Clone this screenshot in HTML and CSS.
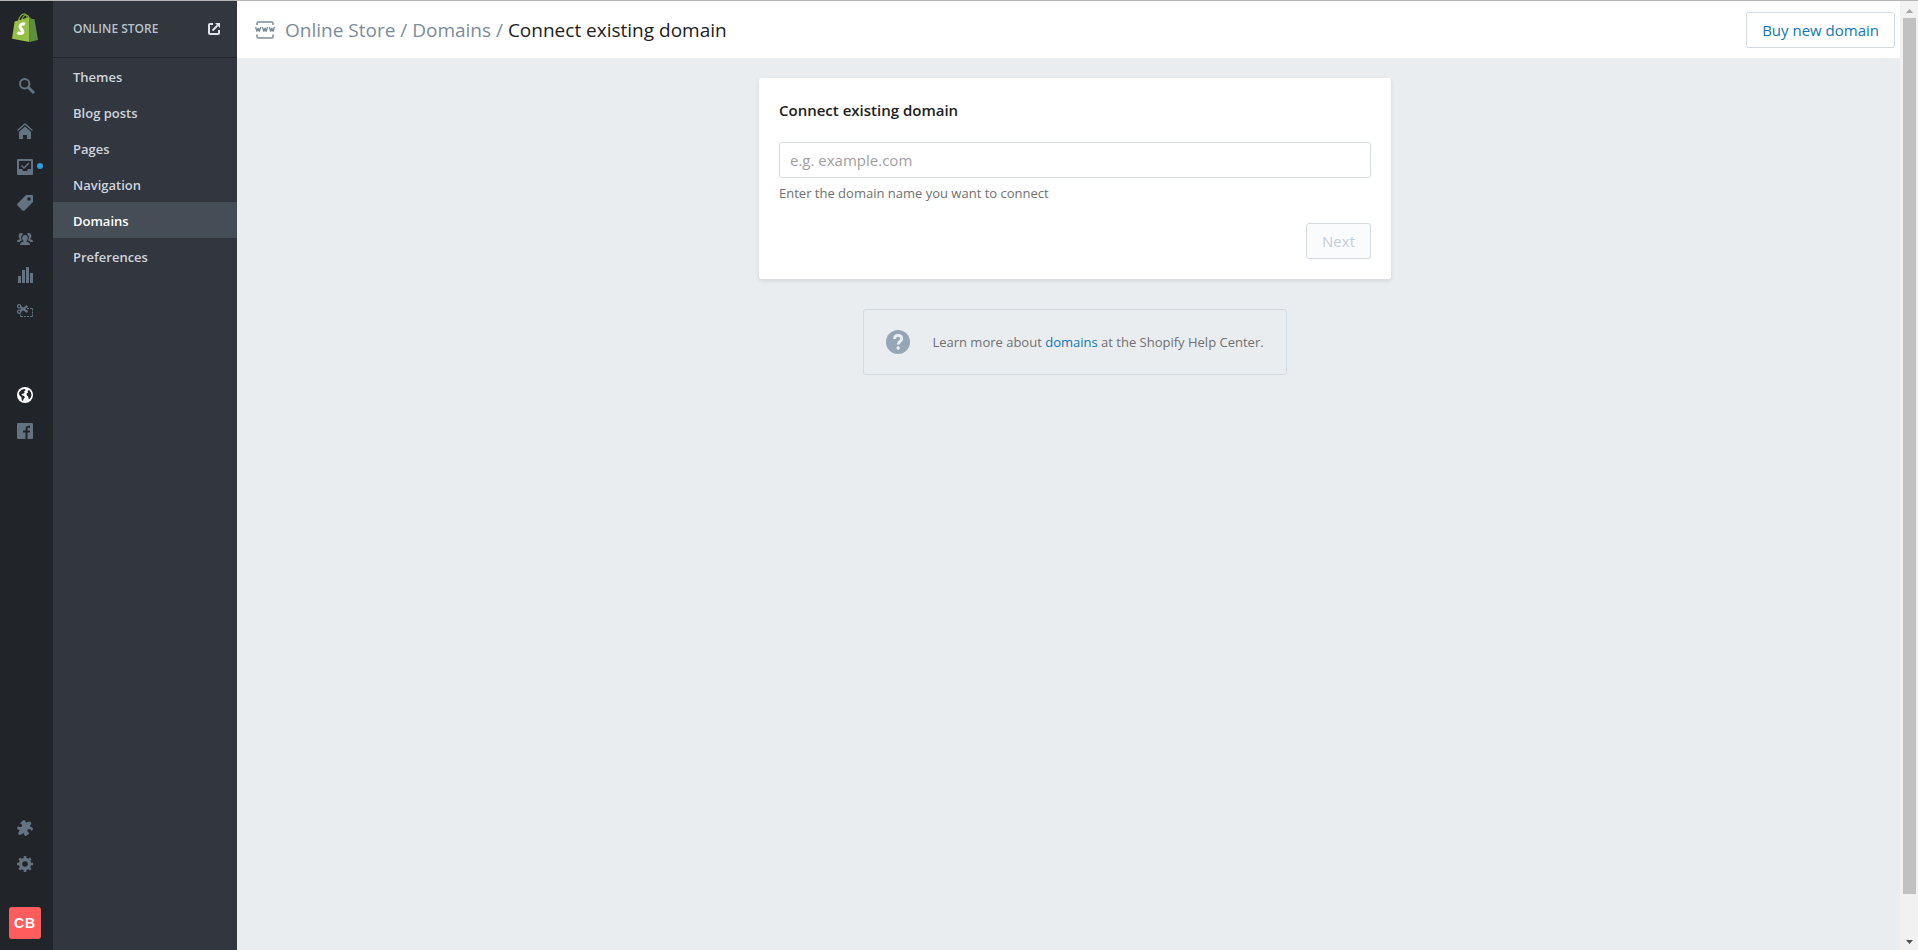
FILE: index.html
```html
<!DOCTYPE html>
<html lang="en">
<head>
  <meta charset="UTF-8">
  <meta name="viewport" content="width=device-width, initial-scale=1.0">
  <title>Connect existing domain</title>
  <link rel="stylesheet" href="styles.css">
</head>
<body>
  <div class="app">
    <nav class="rail" aria-label="Main">
      <a class="logo" href="#" aria-label="Shopify">
        <svg width="26" height="29" viewBox="0 0 26 29">
          <path d="M6.5 8C7 4 10 .8 12.300 .8c2 0 2.900 2.200 3 5.700M10 7c.5-3 2.500-5 4.500-5 1.500 0 2.300 1.500 2.600 4" fill="none" stroke="#7da63a" stroke-width="1.200"/>
          <path d="M2.600 8.600L17.500 4v25L0 25.800z" fill="#95bf46"/>
          <path d="M17.500 4l2 1.800 3 .4L26 27.100 17.500 29z" fill="#5e8e3e"/>
          <path d="M12.900 11.200c-1.200-.6-4.200-.7-4.800 2.100-.4 2.600 3.200 3.300 2.700 5.600-.5 2.100-3.500 1.800-5.400.6" fill="none" stroke="#fff" stroke-width="3.200"/>
        </svg>
      </a>
      <a class="rail-item rail-search" href="#" aria-label="Search">
        <svg width="16" height="16" viewBox="0 0 16 16"><circle cx="5.700" cy="5.700" r="4.700" fill="none" stroke="currentColor" stroke-width="2"/><path d="M9 9l6 6" stroke="currentColor" stroke-width="3"/></svg>
      </a>
      <a class="rail-item" href="#" aria-label="Home">
        <svg width="16" height="16" viewBox="0 0 16 16"><path d="M.5 7.500L8 .9l7.500 6.600" fill="none" stroke="currentColor" stroke-width="1.300"/><path d="M8 3.500l6 5.200V16h-4v-4H6v4H2V8.700z" fill="currentColor"/></svg>
      </a>
      <a class="rail-item" href="#" aria-label="Orders">
        <svg width="16" height="16" viewBox="0 0 16 16"><path fill="currentColor" fill-rule="evenodd" d="M1 0h14a1 1 0 0 1 1 1v14a1 1 0 0 1-1 1H1a1 1 0 0 1-1-1V1a1 1 0 0 1 1-1zm1 2v8h3l1 2h4l1-2h3V2z"/><path d="M4.500 6.500L7 9l5-5" fill="none" stroke="currentColor" stroke-width="1.500"/></svg>
        <span class="dot"></span>
      </a>
      <a class="rail-item" href="#" aria-label="Products">
        <svg width="16" height="16" viewBox="0 0 16 16"><path fill="currentColor" fill-rule="evenodd" d="M9 0h6a1 1 0 0 1 1 1v6l-8.500 8.500a1.500 1.500 0 0 1-2 0L.5 10.500a1.500 1.500 0 0 1 0-2zm3 2.200a1.800 1.800 0 1 0 0 3.600 1.800 1.800 0 0 0 0-3.600z"/></svg>
      </a>
      <a class="rail-item" href="#" aria-label="Customers">
        <svg width="16" height="16" viewBox="0 0 16 16"><path fill="currentColor" d="M8 4c1.800 0 2.800 1.200 2.800 2.900 0 1.300-.5 2.300-1.200 2.900v.9c1.500.4 3.400.9 3.400 3.300H3c0-2.400 1.900-2.900 3.400-3.300v-.9c-.7-.6-1.200-1.600-1.200-2.900C5.200 5.200 6.200 4 8 4z"/><path fill="currentColor" d="M4 2c1 0 1.800.4 2.200 1.100C4.700 3.800 4 5.200 4.200 7c.1 1 .3 1.700.8 2.500-1.300.4-2 .8-2.500 1.500H0c0-1.800 1.300-2.300 2.700-2.700v-.8C2 7 1.700 6 1.700 5 1.700 3.200 2.500 2 4 2zm8 0c-1 0-1.800.4-2.200 1.100 1.500.7 2.200 2.100 2 3.900-.1 1-.3 1.700-.8 2.500 1.300.4 2 .8 2.500 1.500H16c0-1.800-1.300-2.300-2.700-2.700v-.8c.7-.5 1-1.500 1-2.500 0-1.800-.8-3-2.300-3z"/></svg>
      </a>
      <a class="rail-item" href="#" aria-label="Reports">
        <svg width="16" height="16" viewBox="0 0 16 16"><path fill="currentColor" d="M1 9h3v7H1zM5 3h3v13H5zM9 0h3v16H9zM13 6h3v10h-3z"/></svg>
      </a>
      <a class="rail-item" href="#" aria-label="Discounts">
        <svg width="16" height="16" viewBox="0 0 16 16"><g fill="none" stroke="currentColor"><circle cx="2.200" cy="3.200" r="1.600" stroke-width="1.300"/><circle cx="2.200" cy="8.800" r="1.600" stroke-width="1.300"/><path d="M3.500 4.200L10.500 9M3.500 7.800l7-5" stroke-width="2.200"/><path d="M10 5.500h2m1 0h2.500v2m0 1v2m0 1v2H13m-1 0h-2m-1 0H7m-1 0H3.500v-2"/></g></svg>
      </a>
      <a class="rail-item rail-channels active" href="#" aria-label="Online Store">
        <svg width="16" height="16" viewBox="0 0 16 16"><circle cx="8" cy="8" r="8" fill="currentColor"/><path fill="#212429" d="M2 5.500L4.500 2.800l3-.8 1.300 1L7 4.500l.7 1L6.300 6.800 5 6.800l-.5 1.200 2.600 1.100.8 1.500-1.400 1.300L6 14l-1.200-.7-.4-3L2.300 8zM10.500 4l1.500-1 2 2.500.5 2.800-1 2.800-1.600 1.300-.8-3L9.600 8l.2-1.800 1.400-.7z"/></svg>
      </a>
      <a class="rail-item" href="#" aria-label="Facebook">
        <svg width="16" height="16" viewBox="0 0 16 16"><rect width="16" height="16" rx="1" fill="currentColor"/><path d="M9.500 16V6c0-2 1-2.500 3.500-2.300M6 8.500h7" fill="none" stroke="#212429" stroke-width="2"/></svg>
      </a>
      <a class="rail-item rail-apps" href="#" aria-label="Apps">
        <svg width="16" height="16" viewBox="0 0 16 16"><path fill="currentColor" d="M5 1.500C6-.2 8.300 0 8.500 1.500c.1 1 .9 1.300 1.700.8 1-.8 2.500-1.200 3.500-.2 1 1.100.5 2.300-.4 3.100-.6.6-.4 1.300.3 1.500 1.300.2 2.500 1 2.400 2.300-.1 1-.8 1.700-1.700 1.700-.1-1.800-2.600-2.500-3.600-1-.8 1.400.2 2.900 1.600 3-.1.900-.7 1.600-1.600 2-1 .4-1.200 1.300-2 1.300-1.100 0-1.400-1-1.700-2-.3-.9-1-.9-1.700-.2-.9 1-2.400 1.600-3.500.6-.9-1-.5-2.300.4-3.100.6-.7.300-1.400-.6-1.600C.6 9.400-.1 8.800.1 7.700.3 6.500 1.500 6.200 2.200 6.700c1.300.7 2.800 0 2.800-1.300 0-1.100-1-1.700-1.900-1.500-.2-1 .8-1.900 1.900-2.400z"/></svg>
      </a>
      <a class="rail-item" href="#" aria-label="Settings">
        <svg width="16" height="16" viewBox="0 0 16 16"><g stroke="currentColor" fill="none"><circle cx="8" cy="8" r="4.500" stroke-width="3.400"/><path d="M8 0v3M8 13v3M0 8h3M13 8h3M2.300 2.300l2.200 2.200M11.500 11.500l2.200 2.200M2.300 13.700l2.200-2.200M11.500 4.500l2.200-2.200" stroke-width="2.600"/></g></svg>
      </a>
      <button class="avatar" type="button" aria-label="Account">CB</button>
    </nav>

    <nav class="subnav" aria-label="Online Store">
      <div class="subnav-header">
        <span>ONLINE STORE</span>
        <a class="external" href="#" aria-label="View your website">
          <svg width="12" height="12" viewBox="0 0 12 12"><path d="M5 1H2a1 1 0 0 0-1 1v8a1 1 0 0 0 1 1h8a1 1 0 0 0 1-1V7" fill="none" stroke="currentColor" stroke-width="2"/><path d="M4.500 7.500l5-5" stroke="currentColor" stroke-width="2"/><path d="M7 0h5v5z" fill="currentColor"/></svg>
        </a>
      </div>
      <a class="subnav-item" href="#">Themes</a>
      <a class="subnav-item" href="#">Blog posts</a>
      <a class="subnav-item" href="#">Pages</a>
      <a class="subnav-item" href="#">Navigation</a>
      <a class="subnav-item active" href="#">Domains</a>
      <a class="subnav-item" href="#">Preferences</a>
    </nav>

    <main class="main">
      <header class="header">
        <svg class="header-icon" width="20" height="18" viewBox="0 0 20 18"><g fill="none" stroke="currentColor"><path d="M2 4V2.500A1.500 1.500 0 0 1 3.500 1h13A1.500 1.500 0 0 1 18 2.500V4M2 13.500v2A1.500 1.500 0 0 0 3.500 17h13a1.500 1.500 0 0 0 1.500-1.500v-2" stroke-width="1.500"/><path d="M.6 6l1.300 4.500L3.100 7l1.200 3.500L5.600 6M7.500 6l1.300 4.500L10 7l1.200 3.500L12.500 6M14.400 6l1.300 4.500L16.900 7l1.200 3.500L19.400 6" stroke-width="1.300" stroke-linejoin="bevel"/></g></svg>
        <h1 class="breadcrumb"><a href="#">Online Store</a> <span>/</span> <a href="#">Domains</a> <span>/</span> Connect existing domain</h1>
        <button class="btn btn-buy" type="button">Buy new domain</button>
      </header>

      <div class="content">
        <form class="card">
          <h2><label for="domain">Connect existing domain</label></h2>
          <input type="text" id="domain" name="domain" placeholder="e.g. example.com" aria-describedby="domain-help">
          <p class="help-text" id="domain-help">Enter the domain name you want to connect</p>
          <button class="btn btn-next" type="submit" disabled>Next</button>
        </form>

        <div class="learn-more">
          <svg width="24" height="24" viewBox="0 0 24 24"><circle cx="12" cy="12" r="12" fill="#95a7b7"/><path d="M8.500 9c0-2.200 1.400-3.600 3.600-3.600s3.600 1.300 3.600 3.300c0 2.600-3.500 2.900-3.500 5.900" fill="none" stroke="#ebeef0" stroke-width="2.800"/><circle cx="12.100" cy="18" r="1.700" fill="#ebeef0"/></svg>
          <p>Learn more about <a href="#">domains</a> at the Shopify Help Center.</p>
        </div>
      </div>
    </main>

    <div class="scrollbar" aria-hidden="true">
      <svg width="7" height="4" viewBox="0 0 7 4"><path d="M0 4L3.500 0 7 4z" fill="#a3a3a3"/></svg>
      <div class="thumb"></div>
      <svg width="7" height="4" viewBox="0 0 7 4"><path d="M0 0h7L3.500 4z" fill="#505050"/></svg>
    </div>
  </div>
</body>
</html>
```
FILE: styles.css
```css
* {
    box-sizing: border-box;
}
body {
    margin: 0;
    font-family: "Open Sans", "Noto Sans", sans-serif;
    font-size: 13px;
    line-height: 20px;
    color: #707070;
    background: #e9edf0;
}
a {
    color: #0f76bd;
    text-decoration: none;
}
svg {
    display: block;
    flex-shrink: 0;
}
button, input {
    font-family: inherit;
}
.app {
    display: flex;
    min-height: 100vh;
    border-top: 1px solid #b5b5b5;
}

/* icon rail */
.rail {
    display: flex;
    flex-direction: column;
    width: 53px;
    padding: 12px 0 11px;
    background: #212429;
}
.logo {
    margin: 0 0 26px 12px;
}
.rail-item {
    display: flex;
    align-items: center;
    height: 36px;
    padding-left: 17px;
    color: #637381;
}
.rail-item.active {
    color: #fff;
}
.rail-search {
    padding-left: 19px;
    margin-bottom: 9px;
}
.rail-channels {
    margin-top: 48px;
}
.rail-apps {
    margin-top: auto;
}
.dot {
    width: 6px;
    height: 6px;
    margin: 0 0 3px 4px;
    border-radius: 50%;
    background: #2e9be0;
}
.avatar {
    width: 32px;
    height: 32px;
    margin: 25px 0 0 9px;
    padding: 0;
    border: 0;
    border-radius: 3px;
    background: #ff5d5d;
    color: #fff;
    font-family: "Liberation Sans", Arial, sans-serif;
    font-size: 14px;
    font-weight: bold;
    letter-spacing: 1px;
}

/* section menu */
.subnav {
    width: 184px;
    background: #32363f;
}
.subnav-header {
    display: flex;
    align-items: center;
    justify-content: space-between;
    height: 57px;
    padding: 0 17px 0 20px;
    border-bottom: 1px solid #212429;
    background: #31373d;
    color: #b6c2cd;
    font-size: 12px;
    font-weight: 600;
}
.external {
    color: #dfe3e8;
}
.subnav-item {
    display: block;
    padding: 9px 20px 7px;
    color: #ced4dc;
    font-weight: 600;
}
.subnav-item.active {
    background: #454d56;
    color: #fff;
}

/* page */
.main {
    flex: 1;
}
.header {
    display: flex;
    align-items: center;
    height: 57px;
    padding: 0 5px 0 18px;
    background: #fff;
}
.header-icon {
    margin-right: 10px;
    color: #798c9c;
}
.breadcrumb {
    margin: 0;
    font-size: 19px;
    font-weight: 400;
    line-height: 28px;
    color: #212121;
}
.breadcrumb a, .breadcrumb span {
    color: #798c9c;
}
.btn {
    height: 36px;
    padding: 0 15px;
    border: 1px solid #d3dbe2;
    border-radius: 3px;
    background: #fff;
    color: #0f76bd;
    font-size: 15px;
}
.btn-buy {
    margin-left: auto;
}
.btn-next {
    align-self: flex-end;
    background: #fafbfc;
    color: #c3cfd8;
}
.content {
    display: flex;
    flex-direction: column;
    align-items: center;
    padding: 20px 0 20px 13px;
}
.card {
    display: flex;
    flex-direction: column;
    width: 100%;
    max-width: 632px;
    padding: 20px;
    border-radius: 3px;
    background: #fff;
    box-shadow: 0 2px 4px rgba(0, 0, 0, 0.1);
}
.card h2 {
    margin: 0 0 20px;
    font-size: 15px;
    font-weight: 600;
    line-height: 24px;
    color: #212121;
}
.card input {
    height: 36px;
    padding: 0 10px;
    border: 1px solid #d3dbe2;
    border-radius: 3px;
    font-size: 15px;
}
.card input::placeholder {
    color: #a0a0a0;
}
.help-text {
    margin: 5px 0 20px;
}
.learn-more {
    display: flex;
    align-items: center;
    gap: 22px;
    margin-top: 30px;
    padding: 20px 22px;
    border: 1px solid #d3dbe2;
    border-radius: 3px;
}
.learn-more p {
    margin: 0;
}

/* scroll track */
.scrollbar {
    display: flex;
    flex-direction: column;
    align-items: center;
    width: 18px;
    padding: 8px 0 6px;
    background: #f1f1f1;
}
.thumb {
    flex: 1;
    width: 13px;
    margin: 5px 0 46px;
    background: #c1c1c1;
}
```
